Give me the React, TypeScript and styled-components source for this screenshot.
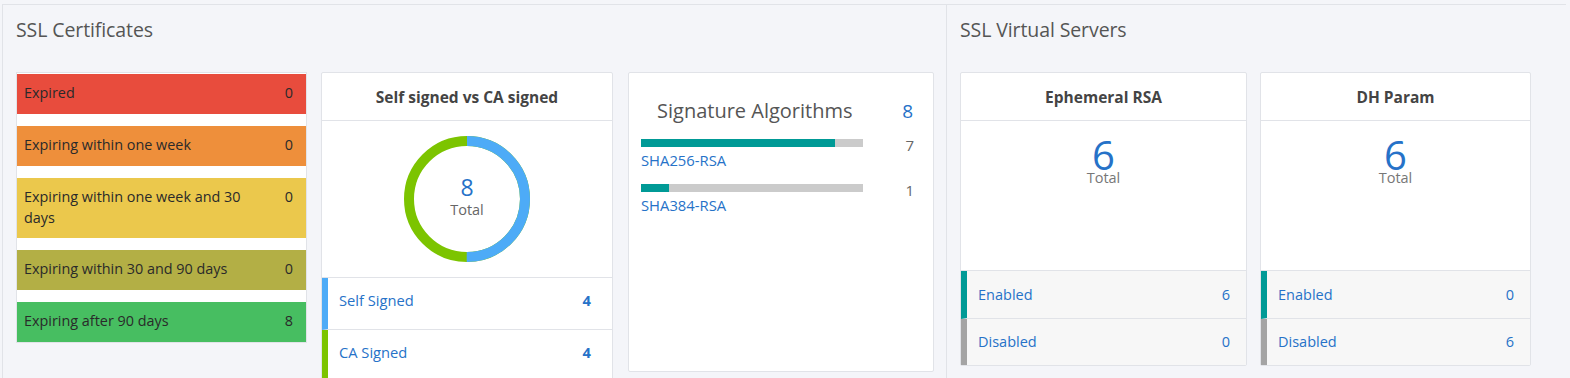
import React from 'react';
import styled, { createGlobalStyle } from 'styled-components';

const GlobalStyle = createGlobalStyle`
  html, body {
    margin: 0;
    padding: 0;
    background: #f4f5f9;
    font-family: "Open Sans", "Noto Sans", sans-serif;
    overflow: hidden;
  }
`;

const colors = {
  border: '#e1e3e8',
  text: '#555',
  link: '#2672c8',
  teal: '#009a96',
  gray: '#a4a4a4',
};

const Page = styled.div`
  display: flex;
  height: 378px;
  padding-top: 4px;
  padding-left: 2px;
  box-sizing: border-box;
  overflow: hidden;
`;

const Panel = styled.section<{ $width: number }>`
  width: ${(p) => p.$width}px;
  flex-shrink: 0;
  border-top: 1px solid ${colors.border};
  border-left: 1px solid ${colors.border};
  background: #f4f5f9;
  padding: 0 0 0 13px;
  box-sizing: border-box;
`;

const PanelTitle = styled.h2`
  margin: 0;
  height: 67px;
  padding-top: 11px;
  box-sizing: border-box;
  font-size: 19.5px;
  font-weight: 400;
  color: #555;
  letter-spacing: -0.1px;
`;

const Row = styled.div<{ $gap: number }>`
  display: flex;
  align-items: flex-start;
  gap: ${(p) => p.$gap}px;
`;

const StatusList = styled.div`
  width: 291px;
  background: #fff;
  border: 1px solid ${colors.border};
  box-sizing: border-box;
  display: flex;
  flex-direction: column;
  gap: 12px;
  padding-top: 1px;
`;

const StatusItem = styled.div<{ $bg: string }>`
  background: ${(p) => p.$bg};
  display: flex;
  justify-content: space-between;
  align-items: flex-start;
  padding: 8px 13px 10px 7px;
  min-height: 40px;
  box-sizing: border-box;
  font-size: 14.4px;
  line-height: 21px;
  color: #2a2a2a;
`;

const StatusLabel = styled.span`
  max-width: 240px;
`;

const Card = styled.div<{ $width: number; $height?: number }>`
  width: ${(p) => p.$width}px;
  ${(p) => (p.$height ? `height: ${p.$height}px;` : '')}
  background: #fff;
  border: 1px solid ${colors.border};
  border-radius: 2px;
  box-sizing: border-box;
  display: flex;
  flex-direction: column;
`;

const CardHeader = styled.div`
  height: 47px;
  flex-shrink: 0;
  border-bottom: 1px solid ${colors.border};
  display: flex;
  align-items: center;
  justify-content: center;
  font-size: 15.5px;
  font-weight: 700;
  color: #444;
`;

const DonutArea = styled.div`
  height: 156px;
  display: flex;
  align-items: center;
  justify-content: center;
  position: relative;
  border-bottom: 1px solid ${colors.border};
`;

const DonutCenter = styled.div`
  position: absolute;
  left: 0;
  right: 0;
  top: 53px;
  text-align: center;
`;

const DonutValue = styled.div`
  font-size: 23px;
  line-height: 26px;
  color: ${colors.link};
`;

const DonutLabel = styled.div`
  font-size: 14.5px;
  line-height: 20px;
  color: #666;
`;

const LegendRow = styled.div<{ $bar: string }>`
  height: 52px;
  display: flex;
  align-items: center;
  justify-content: space-between;
  padding: 0 21px 7px 11px;
  box-sizing: border-box;
  border-left: 6px solid ${(p) => p.$bar};
  border-bottom: 1px solid ${colors.border};
  font-size: 14.7px;
  color: ${colors.link};
`;

const LegendCount = styled.span`
  font-weight: 700;
`;

const AlgoCard = styled(Card)`
  padding: 24px 19px 0 12px;
  margin-left: 1px;
`;

const AlgoTitle = styled.div`
  display: flex;
  justify-content: space-between;
  align-items: center;
  padding-left: 16px;
  font-size: 20px;
  line-height: 28px;
  color: #555;
`;

const AlgoTotal = styled.span`
  color: ${colors.link};
  font-size: 19px;
  margin-right: 1px;
`;

const AlgoList = styled.div`
  display: flex;
  flex-direction: column;
  gap: 14px;
  margin-top: 14px;
`;

const AlgoItem = styled.div`
  display: flex;
  justify-content: space-between;
  align-items: flex-start;
`;

const AlgoLeft = styled.div`
  width: 222px;
`;

const Track = styled.div`
  height: 8px;
  background: #cbcbcb;
`;

const Fill = styled.div`
  height: 100%;
  background: ${colors.teal};
`;

const AlgoName = styled.div`
  font-size: 14.8px;
  line-height: 20px;
  color: ${colors.link};
  margin-top: 3px;
`;

const AlgoCount = styled.span`
  font-size: 15px;
  color: #666;
  line-height: 20px;
  margin-top: -4px;
`;

const BigStat = styled.div`
  height: 150px;
  flex-shrink: 0;
  border-bottom: 1px solid ${colors.border};
  text-align: center;
  padding-top: 16px;
  box-sizing: border-box;
`;

const BigValue = styled.div`
  font-size: 40px;
  line-height: 36px;
  color: ${colors.link};
`;

const BigLabel = styled.div`
  font-size: 14.5px;
  line-height: 16px;
  margin-top: -3px;
  color: #777;
`;

const StateRow = styled.div<{ $bar: string; $last?: boolean }>`
  height: 47px;
  background: #f7f7f7;
  display: flex;
  align-items: center;
  justify-content: space-between;
  padding: 0 16px 0 11px;
  border-left: 6px solid ${(p) => p.$bar};
  border-bottom: ${(p) => (p.$last ? 'none' : `1px solid ${colors.border}`)};
  font-size: 14.5px;
  color: ${colors.link};
`;

const statuses = [
  { label: 'Expired', count: 0, bg: '#e84c3d' },
  { label: 'Expiring within one week', count: 0, bg: '#ee8f3b' },
  { label: 'Expiring within one week and 30 days', count: 0, bg: '#ebc84c' },
  { label: 'Expiring within 30 and 90 days', count: 0, bg: '#b3af45' },
  { label: 'Expiring after 90 days', count: 8, bg: '#47be61' },
];

const algorithms = [
  { name: 'SHA256-RSA', count: 7 },
  { name: 'SHA384-RSA', count: 1 },
];

const Donut: React.FC<{ a: number; b: number }> = ({ a, b }) => {
  const r = 58;
  const c = 2 * Math.PI * r;
  const share = a / (a + b);
  return (
    <svg width="128" height="128" viewBox="0 0 128 128">
      <circle cx="64" cy="64" r={r} fill="none" stroke="#7cc400" strokeWidth="10" />
      <circle
        cx="64"
        cy="64"
        r={r}
        fill="none"
        stroke="#4dabf7"
        strokeWidth="10"
        strokeDasharray={`${c * share} ${c}`}
        transform="rotate(-90 64 64)"
      />
    </svg>
  );
};

const StateCard: React.FC<{ title: string; total: number; enabled: number; disabled: number; width: number }> = ({
  title,
  total,
  enabled,
  disabled,
  width,
}) => (
  <Card $width={width} $height={294}>
    <CardHeader>{title}</CardHeader>
    <BigStat>
      <BigValue>{total}</BigValue>
      <BigLabel>Total</BigLabel>
    </BigStat>
    <StateRow $bar={colors.teal}>
      <span>Enabled</span>
      <span>{enabled}</span>
    </StateRow>
    <StateRow $bar={colors.gray} $last>
      <span>Disabled</span>
      <span>{disabled}</span>
    </StateRow>
  </Card>
);

export default function App() {
  const algoTotal = algorithms.reduce((s, a) => s + a.count, 0);
  return (
    <Page>
      <GlobalStyle />
      <Panel $width={944}>
        <PanelTitle>SSL Certificates</PanelTitle>
        <Row $gap={14}>
          <StatusList>
            {statuses.map((s) => (
              <StatusItem key={s.label} $bg={s.bg}>
                <StatusLabel>{s.label}</StatusLabel>
                <span>{s.count}</span>
              </StatusItem>
            ))}
          </StatusList>
          <Card $width={292}>
            <CardHeader>Self signed vs CA signed</CardHeader>
            <DonutArea>
              <Donut a={4} b={4} />
              <DonutCenter>
                <DonutValue>8</DonutValue>
                <DonutLabel>Total</DonutLabel>
              </DonutCenter>
            </DonutArea>
            <LegendRow $bar="#4dabf7">
              <span>Self Signed</span>
              <LegendCount>4</LegendCount>
            </LegendRow>
            <LegendRow $bar="#7cc400">
              <span>CA Signed</span>
              <LegendCount>4</LegendCount>
            </LegendRow>
          </Card>
          <AlgoCard $width={306} $height={300}>
            <AlgoTitle>
              <span>Signature Algorithms</span>
              <AlgoTotal>{algoTotal}</AlgoTotal>
            </AlgoTitle>
            <AlgoList>
              {algorithms.map((a) => (
                <AlgoItem key={a.name}>
                  <AlgoLeft>
                    <Track>
                      <Fill style={{ width: `${(a.count / algoTotal) * 100}%` }} />
                    </Track>
                    <AlgoName>{a.name}</AlgoName>
                  </AlgoLeft>
                  <AlgoCount>{a.count}</AlgoCount>
                </AlgoItem>
              ))}
            </AlgoList>
          </AlgoCard>
        </Row>
      </Panel>
      <Panel $width={620}>
        <PanelTitle>SSL Virtual Servers</PanelTitle>
        <Row $gap={13}>
          <StateCard title="Ephemeral RSA" total={6} enabled={6} disabled={0} width={287} />
          <StateCard title="DH Param" total={6} enabled={0} disabled={6} width={271} />
        </Row>
      </Panel>
    </Page>
  );
}
